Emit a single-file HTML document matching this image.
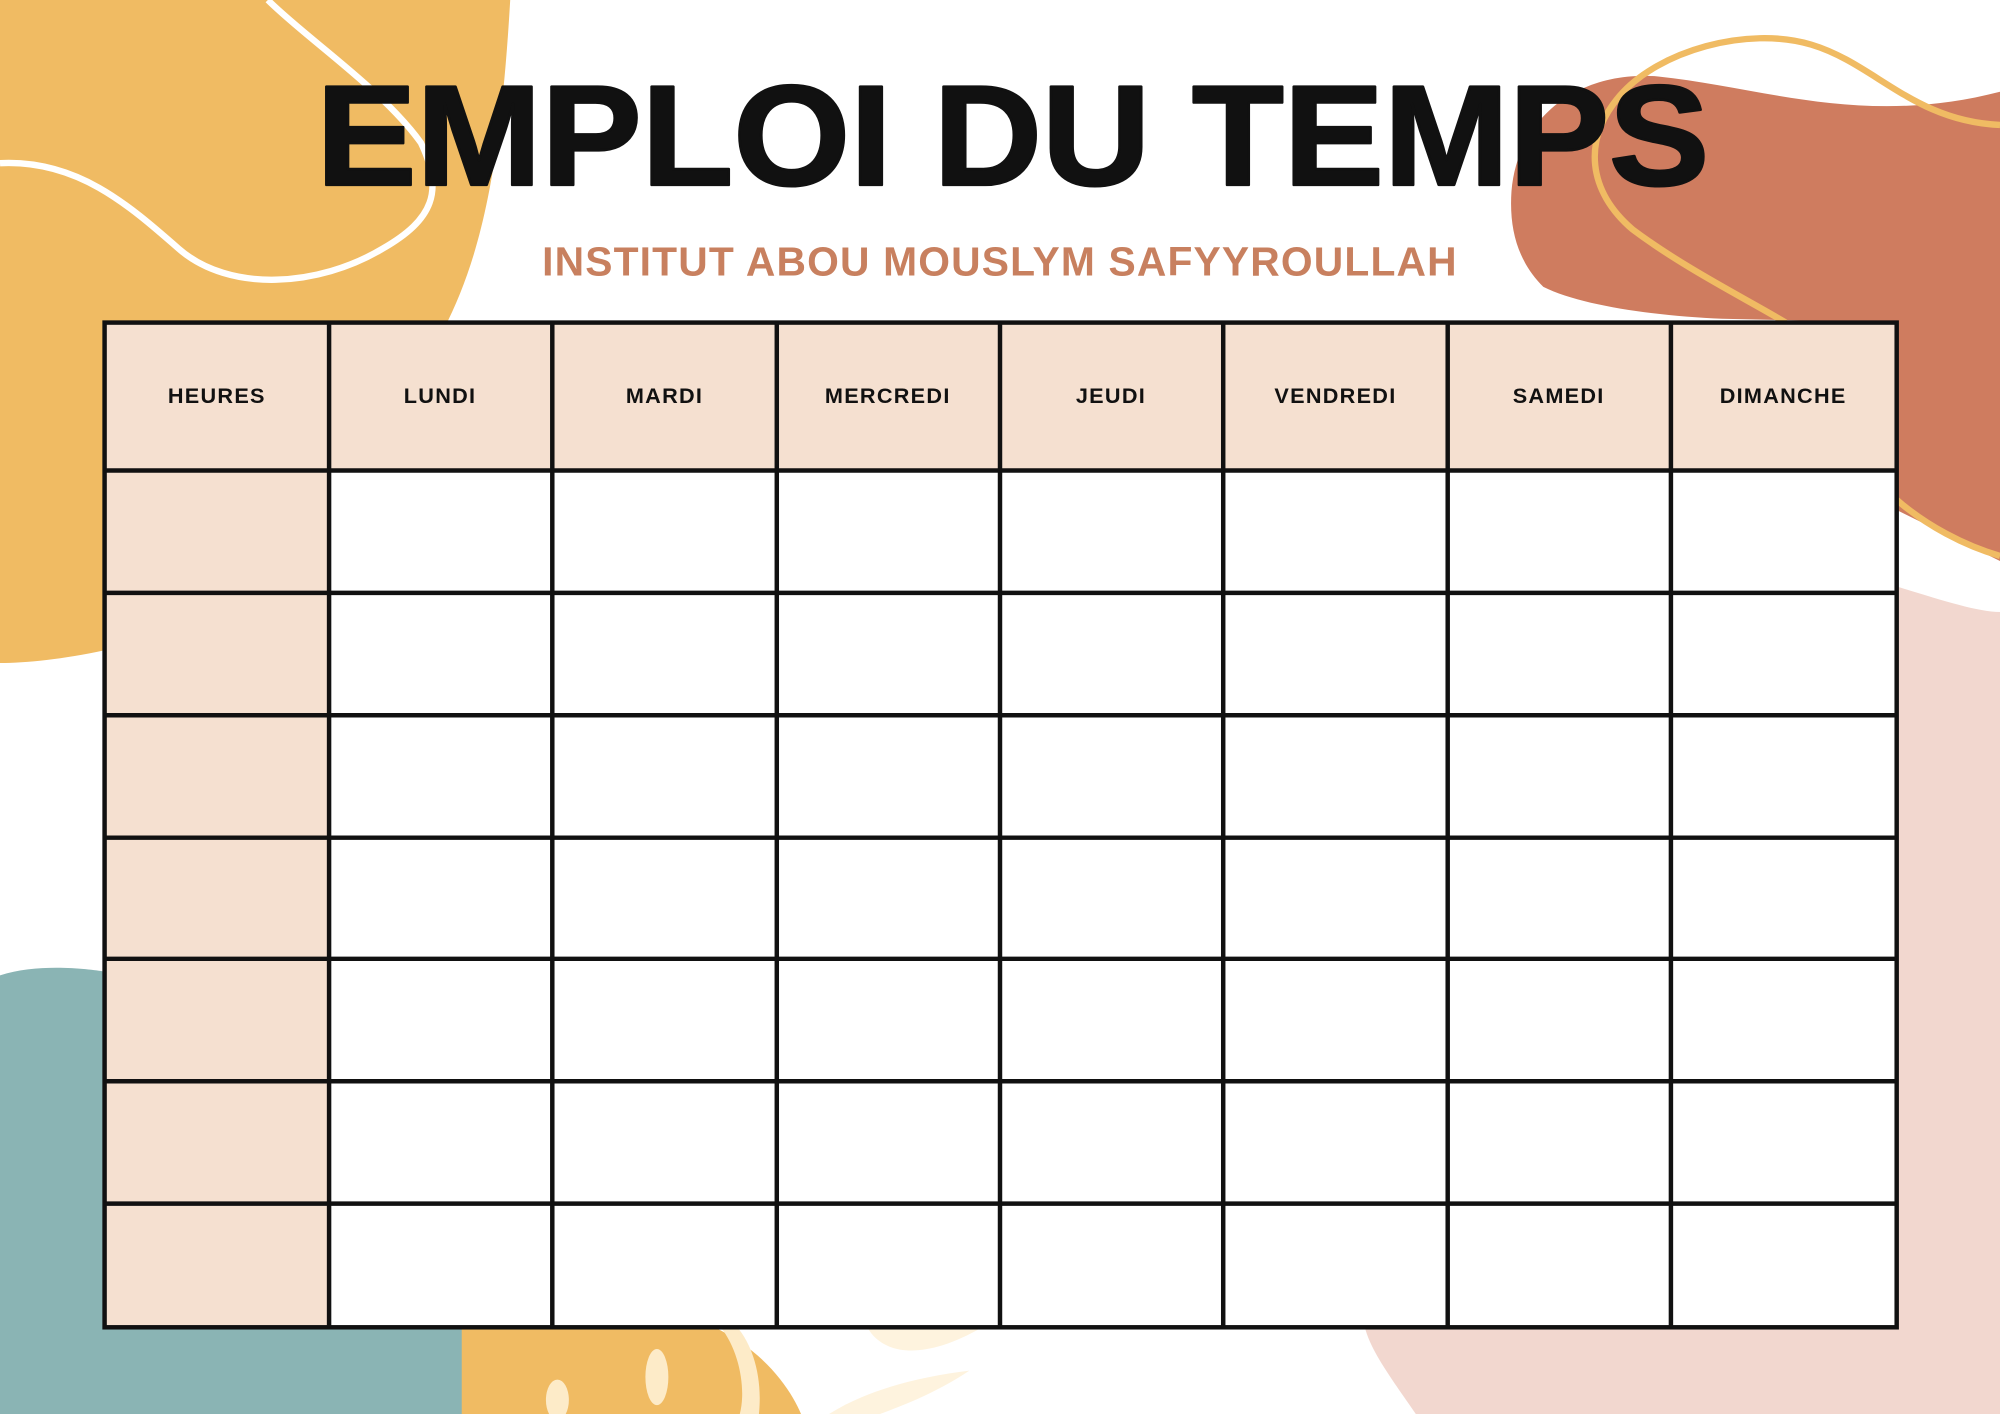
<!DOCTYPE html>
<html><head><meta charset="utf-8"><style>
html,body{margin:0;padding:0;background:#fff;}
svg{display:block;}
</style></head><body>
<svg width="2000" height="1414" viewBox="0 0 1568 1109" preserveAspectRatio="none" xmlns="http://www.w3.org/2000/svg">
<rect width="1568" height="1109" fill="#fff"/>
<path d="M0,0 H400 C392,140 375,205 348,258 L82,258 V510 C50,517 20,520 0,520 Z" fill="#f0bb63"/>
<path d="M0,128 C60,125 100,160 140,195 C180,230 250,225 300,195 C340,172 348,150 330,112 C300,70 240,30 210,0" fill="none" stroke="#fff" stroke-width="5"/>
<path d="M1185,150 C1190,90 1240,55 1300,60 C1380,68 1460,100 1568,72 V440 L1487,400 V253 L1350,250 C1300,248 1240,240 1210,225 C1190,205 1183,180 1185,150 Z" fill="#cf7c5f"/>
<path d="M1568,98 C1500,95 1470,50 1420,35 C1370,20 1300,40 1270,75 C1240,110 1245,150 1280,180 C1320,210 1370,235 1400,253" fill="none" stroke="#f0bb63" stroke-width="5"/>
<path d="M1487,392 C1510,412 1540,428 1568,436" fill="none" stroke="#f0bb63" stroke-width="5"/>
<path d="M1487,460 C1520,470 1550,480 1568,480 V1109 H1110 C1090,1080 1075,1060 1070,1041 H1487 Z" fill="#f2d7cf"/>
<path d="M0,765 C30,755 70,760 82,762 V1041 H365 V1109 H0 Z" fill="#8ab4b4"/>
<path d="M362,1041 H560 C600,1060 620,1090 628,1109 H362 Z" fill="#f0bb63"/>
<g fill="#fdebc8">
<ellipse cx="437" cy="1098" rx="9" ry="16"/>
<ellipse cx="515" cy="1080" rx="9" ry="22"/>
<path d="M565,1041 C580,1060 585,1090 580,1109 H595 C598,1080 590,1055 578,1041 Z"/>
<path d="M680,1041 C690,1060 720,1070 770,1041 Z" opacity="0.6"/>
<path d="M650,1109 C680,1090 720,1080 760,1075 C730,1095 700,1105 690,1109 Z" opacity="0.6"/>
</g>
<text x="248" y="145" font-family="Liberation Sans, sans-serif" font-weight="bold" font-size="112" textLength="1092" lengthAdjust="spacingAndGlyphs" fill="#111" stroke="#111" stroke-width="2" stroke-linejoin="round">EMPLOI DU TEMPS</text>
<text x="425" y="216" font-family="Liberation Sans, sans-serif" font-weight="bold" font-size="32" textLength="717" lengthAdjust="spacing" fill="#c8805f">INSTITUT ABOU MOUSLYM SAFYYROULLAH</text>
<rect x="82" y="253" width="1405" height="788" fill="#fff"/>
<rect x="82" y="253" width="1405" height="116" fill="#f5e0d0"/>
<rect x="82" y="253" width="176" height="788" fill="#f5e0d0"/>
<g stroke="#111" stroke-width="3.5" fill="none">
<rect x="82" y="253" width="1405" height="788"/>
<path d="M258,253V1041M433,253V1041M609,253V1041M784,253V1041M959,253V1041M1135,253V1041M1310,253V1041"/>
<path d="M82,369H1487M82,465H1487M82,561H1487M82,657H1487M82,752H1487M82,848H1487M82,944H1487"/>
</g>
<g font-family="Liberation Sans, sans-serif" font-weight="bold" font-size="17" fill="#111" text-anchor="middle" letter-spacing="1">
<text x="170" y="316">HEURES</text>
<text x="345" y="316">LUNDI</text>
<text x="521" y="316">MARDI</text>
<text x="696" y="316">MERCREDI</text>
<text x="871" y="316">JEUDI</text>
<text x="1047" y="316">VENDREDI</text>
<text x="1222" y="316">SAMEDI</text>
<text x="1398" y="316">DIMANCHE</text>
</g>
</svg>
</body></html>
